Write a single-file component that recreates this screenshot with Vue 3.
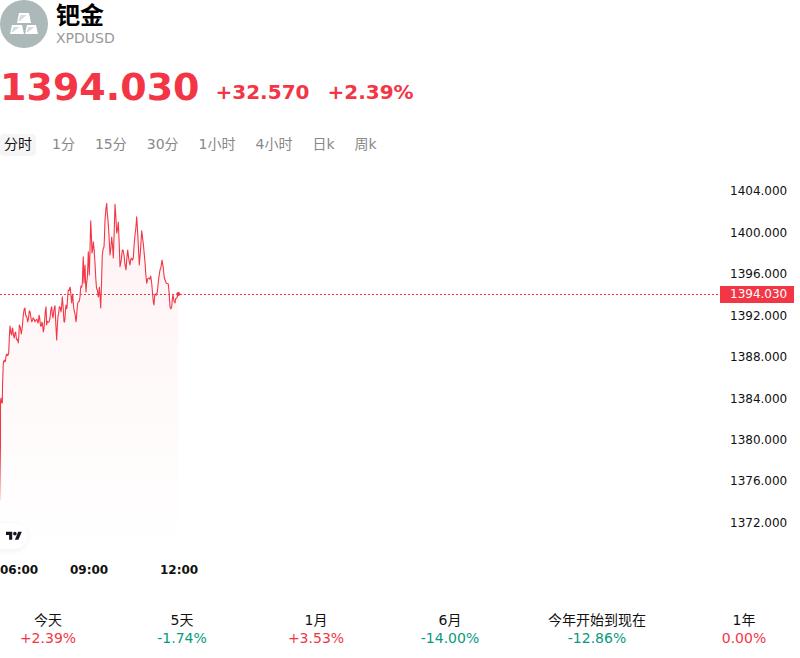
<script setup>
const tabs = ['分时', '1分', '15分', '30分', '1小时', '4小时', '日k', '周k']
const ticks = [
  { label: '1404.000', y: 191 },
  { label: '1400.000', y: 233 },
  { label: '1396.000', y: 274 },
  { label: '1392.000', y: 316 },
  { label: '1388.000', y: 357 },
  { label: '1384.000', y: 399 },
  { label: '1380.000', y: 440 },
  { label: '1376.000', y: 481 },
  { label: '1372.000', y: 523 }
]
const times = [
  { label: '06:00', x: 0 },
  { label: '09:00', x: 70 },
  { label: '12:00', x: 160 }
]
const stats = [
  { label: '今天', value: '+2.39%', up: true },
  { label: '5天', value: '-1.74%', up: false },
  { label: '1月', value: '+3.53%', up: true },
  { label: '6月', value: '-14.00%', up: false },
  { label: '今年开始到现在', value: '-12.86%', up: false },
  { label: '1年', value: '0.00%', up: true }
]
const pts = [
  [0.5, 500], [0.5, 402], [1, 398], [2.3, 403], [2.5, 387], [3.3, 363], [5, 361.7], [6, 356], [6.7, 354], [8.7, 353],
  [10, 326], [11.7, 335], [12.7, 328], [14.3, 338], [15.7, 332], [17, 340], [18.3, 343], [19.3, 325], [21.3, 334],
  [23.3, 315], [25, 308], [26, 316], [27.7, 322], [29.3, 310.7], [31, 318], [32.3, 321], [34, 319], [36, 320], [38, 323], [39, 315],
  [40.5, 326], [42, 322], [43.3, 332], [44.5, 322], [46, 306.7], [46.7, 325], [48, 322], [50, 318], [51.7, 306.7], [53, 318], [55, 305.7],
  [56.7, 340], [58, 316], [59.3, 306.7], [61, 312], [62.3, 296.7], [64, 321.7], [65, 318], [66, 305], [67, 308], [68.3, 290],
  [70, 287], [71, 296], [71.7, 303], [72.7, 294], [74, 310], [76, 321.7], [77, 310], [78.3, 301.7], [80, 297], [81, 286], [82.3, 284],
  [83.3, 256.7], [84, 283], [85, 265], [86, 292], [87.3, 278], [88.3, 251.7], [89.3, 275], [90.7, 220.7], [92, 253], [93.3, 241.7],
  [95, 263], [96.5, 288], [98.3, 297], [99.3, 287], [100.7, 308], [102.3, 255], [104, 247], [105, 220], [106.7, 203.3], [108, 220], [110, 255],
  [111.7, 237], [113.3, 258], [115, 204.3], [116.7, 233], [118.3, 222], [120, 266.7], [122.3, 250], [124, 255], [126, 270], [127.7, 250],
  [130, 265], [131.5, 258], [133.3, 258], [135, 235], [136.7, 216.7], [139.3, 265], [141.7, 230.7], [145, 262], [146.7, 283.3],
  [149, 278], [150.7, 276], [152.7, 295], [154, 305], [155, 294], [157.3, 292], [160, 270], [162, 260], [164.3, 278], [168.3, 284],
  [170, 306.7], [171.7, 306.7], [173, 295], [175, 303], [176.7, 298], [178.3, 294]
]
// Each traced segment gets a small alternating tick, which gives the line its dense intraday texture.
const dense = []
pts.forEach((p, i) => {
  if (i > 2 && i < pts.length - 1) {
    const q = pts[i - 1]
    if (p[0] - q[0] > 0.9) {
      dense.push([(p[0] + q[0]) / 2, (p[1] + q[1]) / 2 + (i % 2 ? 2.2 : -2.2)])
    }
  }
  dense.push(p)
})
const line = dense.map((p, i) => (i ? 'L' : 'M') + p[0] + ' ' + p[1]).join(' ')
const area = line + ' L178.3 550 L0.5 550 Z'
</script>

<template>
  <div class="page">
    <header class="head">
      <svg class="logo" width="48" height="48" viewBox="0 0 48 48">
        <circle cx="24" cy="24" r="24" fill="#adb8b8" />
        <path d="M19 13h10l2 10H17z" fill="#fff" />
        <path d="M20.5 15h6l-6.500 6h-1.500z" fill="#d5dcdc" />
        <path d="M12 25h10l2 9H10z" fill="#fff" />
        <path d="M13.500 27h6l-6.500 5h-1.500z" fill="#d5dcdc" />
        <path d="M27 25h9l2 9H25z" fill="#fff" />
        <path d="M28.500 27h6l-6.500 5h-1.500z" fill="#d5dcdc" />
      </svg>
      <div class="names">
        <div class="name">钯金</div>
        <div class="code">XPDUSD</div>
      </div>
    </header>

    <div class="quote">
      <span class="price">1394.030</span>
      <span class="delta">+32.570</span>
      <span class="delta">+2.39%</span>
    </div>

    <nav class="tabs">
      <span v-for="(t, i) in tabs" :key="t" class="tab" :class="{ active: i === 0 }">{{ t }}</span>
    </nav>

    <section class="chart">
      <svg class="plot" width="720" height="420" viewBox="0 160 720 420">
        <defs>
          <linearGradient id="fillGrad" gradientUnits="userSpaceOnUse" x1="0" y1="204" x2="0" y2="550">
            <stop offset="0" stop-color="#f23645" stop-opacity="0.065" />
            <stop offset="1" stop-color="#f23645" stop-opacity="0" />
          </linearGradient>
          <linearGradient id="lineGrad" gradientUnits="userSpaceOnUse" x1="0" y1="204" x2="0" y2="505">
            <stop offset="0.8" stop-color="#f23645" />
            <stop offset="1" stop-color="#f23645" stop-opacity="0.08" />
          </linearGradient>
        </defs>
        <path :d="area" fill="url(#fillGrad)" />
        <path :d="line" fill="none" stroke="url(#lineGrad)" stroke-width="1.1" stroke-linejoin="round" />
        <line x1="0" y1="294.5" x2="720" y2="294.5" stroke="#f23645" stroke-width="1" stroke-dasharray="2 2" />
        <circle cx="178.3" cy="294" r="2" fill="#f23645" />
      </svg>

      <span v-for="t in ticks" :key="t.label" class="tick" :style="{ top: t.y - 160 - 9 + 'px' }">{{ t.label }}</span>
      <span class="last">1394.030</span>
      <span v-for="t in times" :key="t.label" class="time" :style="{ left: t.x + 'px' }">{{ t.label }}</span>

      <div class="attr">
        <svg width="16" height="12.6" viewBox="0 0 36 28">
          <path d="M14 22H7V11H0V4h14v18zM28 22h-8l7.5-18h8L28 22z" fill="#131722" />
          <circle cx="20" cy="8" r="4" fill="#131722" />
        </svg>
      </div>
    </section>

    <section class="stats">
      <div v-for="s in stats" :key="s.label" class="stat">
        <div class="stat-label">{{ s.label }}</div>
        <div class="stat-value" :class="s.up ? 'up' : 'down'">{{ s.value }}</div>
      </div>
    </section>
  </div>
</template>

<style scoped>
.page {
  width: 800px;
  height: 658px;
  overflow: hidden;
  font-family: "DejaVu Sans", "Noto Sans CJK SC", sans-serif;
  color: #000;
  background: #fff;
}
.head {
  display: flex;
  gap: 8px;
  height: 48px;
}
.logo {
  flex: none;
}
.name {
  font-size: 24px;
  font-weight: 700;
  line-height: 30px;
  padding-top: 1px;
  margin-bottom: -1px;
}
.code {
  font-size: 14px;
  line-height: 16px;
  color: #999;
}
.quote {
  display: flex;
  align-items: flex-end;
  gap: 18px;
  height: 46px;
  margin-top: 16px;
  font-weight: 700;
  color: #f23645;
}
.price {
  font-size: 38px;
  margin-right: -2px;
  line-height: 46px;
}
.delta {
  font-size: 20px;
  font-weight: 700;
  margin-bottom: 6px;
}
.tabs {
  display: flex;
  gap: 12px;
  margin-top: 24px;
  height: 22px;
}
.tab {
  padding: 0 4px;
  font-size: 14px;
  line-height: 20px;
  height: 22px;
  color: #888;
  border-radius: 4px;
}
.tab.active {
  color: #111;
  background: #f5f5f5;
}
.chart {
  position: relative;
  height: 420px;
  margin-top: 4px;
}
.plot {
  position: absolute;
  left: 0;
  top: 0;
}
.tick {
  position: absolute;
  left: 730px;
  font-size: 12px;
  line-height: 18px;
  color: #111;
}
.last {
  position: absolute;
  left: 720px;
  top: 126px;
  width: 74px;
  height: 17px;
  box-sizing: border-box;
  padding-left: 10px;
  font-size: 12px;
  line-height: 17px;
  color: #fff;
  background: #f23645;
}
.time {
  position: absolute;
  top: 402px;
  font-size: 12px;
  font-weight: 700;
  line-height: 16px;
  color: #111;
}
.attr {
  position: absolute;
  left: -12px;
  top: 363px;
  width: 39px;
  height: 26px;
  display: flex;
  align-items: center;
  justify-content: flex-end;
  padding-right: 5px;
  padding-top: 1px;
  box-sizing: border-box;
  background: #fff;
  border-radius: 13px;
  box-shadow: 0 2px 6px rgba(0, 0, 0, 0.06);
}
.stats {
  display: grid;
  grid-template-columns: 96px 96px 96px 96px 122px 96px;
  gap: 38px;
  margin-top: 31px;
  text-align: center;
  font-size: 14px;
  line-height: 18px;
}
.stat-label {
  color: #111;
}
.up {
  color: #f23645;
}
.down {
  color: #089981;
}
</style>

<style>
html, body {
  margin: 0;
  background: #fff;
}
</style>
